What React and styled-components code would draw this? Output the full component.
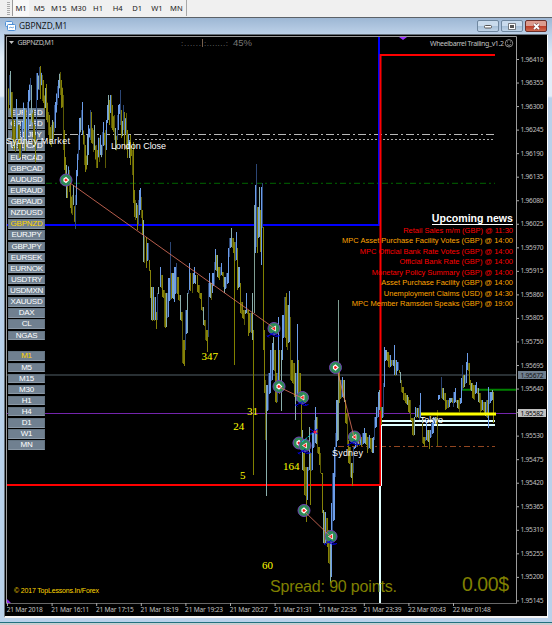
import React from 'react';
import styled, { createGlobalStyle } from 'styled-components';

const periods = ['M1', 'M5', 'M15', 'M30', 'H1', 'H4', 'D1', 'W1', 'MN'];

const symbols = [
  'EURUSD', 'GBPUSD', 'USDJPY', 'USDCAD', 'EURCAD', 'GBPCAD', 'AUDUSD',
  'EURAUD', 'GBPAUD', 'NZDUSD', 'GBPNZD', 'EURJPY', 'GBPJPY', 'EURSEK',
  'EURNOK', 'USDTRY', 'USDMXN', 'XAUUSD', 'DAX', 'CL', 'NGAS',
];

const news = [
  { text: 'Retail Sales m/m (GBP) @ 11:30', high: true },
  { text: 'MPC Asset Purchase Facility Votes (GBP) @ 14:00' },
  { text: 'MPC Official Bank Rate Votes (GBP) @ 14:00', high: true },
  { text: 'Official Bank Rate (GBP) @ 14:00', high: true },
  { text: 'Monetary Policy Summary (GBP) @ 14:00', high: true },
  { text: 'Asset Purchase Facility (GBP) @ 14:00' },
  { text: 'Unemployment Claims (USD) @ 14:30' },
  { text: 'MPC Member Ramsden Speaks (GBP) @ 19:00' },
];

const times = [
  '21 Mar 2018', '21 Mar 16:11', '21 Mar 17:15', '21 Mar 18:19',
  '21 Mar 19:23', '21 Mar 20:27', '21 Mar 21:31', '21 Mar 22:35',
  '21 Mar 23:39', '22 Mar 00:43', '22 Mar 01:48',
];

const prices = Array.from({ length: 24 }, (_, i) => ((196410 - i * 55) / 100000).toFixed(5));

// x, high, low
const bars = `
8 80 118,9 75 105,10 71 112,11 82 128,12 92 140,13 120 150,15 120 152,16 99 138,17 105 148,19 125 158,
20 130 165,21 122 160,23 92 140,24 108 150,26 110 150,27 102 140,28 90 130,29 78 108,30 78 100,31 85 125,
33 110 145,35 125 173,36 73 150,37 73 100,38 70 95,39 67 90,40 66 99,41 68 90,42 75 101,43 80 103,44 90 115,
45 88 108,46 84 120,47 95 130,48 112 135,49 115 142,50 120 152,51 125 147,52 120 140,53 115 146,54 105 132,
55 102 128,56 86 120,57 86 105,58 80 98,59 68 94,60 72 95,61 80 108,62 80 115,63 95 150,64 130 170,65 150 182,
66 165 198,67 178 198,68 162 182,69 170 192,70 180 208,71 190 220,72 195 215,73 185 205,74 200 228,75 195 229,
76 170 205,77 145 185,78 135 160,79 118 150,80 112 138,81 110 130,82 102 135,83 125 150,84 135 165,85 145 172,
86 150 175,87 135 165,88 125 155,90 110 140,91 112 143,92 122 150,93 130 152,94 125 150,95 140 165,96 145 168,
97 150 168,98 130 165,99 138 162,100 135 155,101 140 162,102 132 155,103 122 146,104 128 150,105 130 168,
106 120 150,107 98 130,108 95 120,109 100 125,110 88 120,111 95 128,112 105 130,113 110 138,114 115 140,
115 128 150,116 130 156,117 115 140,118 105 130,119 100 118,120 90 125,121 110 138,122 115 142,123 105 130,
124 112 150,125 112 140,126 113 150,127 130 158,128 128 155,129 140 158,130 135 165,131 142 160,132 150 175,
133 142 203,134 190 217,135 200 220,136 203 218,137 205 230,138 200 225,139 190 215,140 188 210,141 197 218,
142 210 235,143 220 262,146 237 268,148 243 260,150 270 298,151 287 320,153 287 320,155 297 320,156 312 329,
157 293 320,160 267 287,162 275 297,164 290 327,166 293 327,168 278 317,170 242 300,172 273 298,174 267 302,
176 263 293,178 277 300,180 295 320,182 312 363,184 340 366,185 310 350,187 293 333,189 263 290,192 273 293,
194 267 283,197 275 292,199 285 298,201 293 310,203 307 325,205 320 340,207 330 352,208 283 337,209 273 297,
211 283 300,212 273 293,214 262 285,215 249 270,217 255 277,219 267 280,221 263 275,223 272 287,224 277 293,
226 273 288,228 248 283,229 238 257,231 228 247,233 238 253,234 242 365,236 232 260,237 248 290,239 267 287,
240 283 313,242 302 318,244 310 325,246 293 313,248 310 336,250 313 332,252 293 340,253 330 475,254 205 313,
255 185 253,256 164 247,257 207 253,259 187 237,260 210 252,261 187 265,262 183 228,263 227 350,264 330 393,
265 380 440,266 385 496,268 373 410,270 350 393,272 343 380,273 337 370,275 350 402,277 373 402,278 317 393,
281 350 411,282 315 360,284 297 337,286 293 347,287 305 350,289 291 342,290 317 380,292 360 383,294 363 397,
295 373 420,297 324 400,298 360 393,300 373 403,301 397 443,302 430 470,304 453 495,306 467 522,307 467 500,
309 427 470,310 453 505,312 433 470,314 420 447,315 407 443,317 417 453,319 447 465,320 453 473,322 473 513,
323 510 543,325 512 543,327 518 547,328 530 563,330 543 583,331 503 577,332 473 543,334 447 520,335 433 477,
336 400 447,338 300 440,339 370 403,341 380 398,342 377 397,344 380 402,345 400 423,347 413 445,348 440 463,
350 447 477,352 463 486,353 447 473,355 433 448,356 432 447,358 433 445,360 437 445,362 433 445,364 428 443,
366 433 445,367 437 453,369 435 448,371 438 452,373 437 453,374 417 440,376 407 427,378 392 417,379 390 410,
381 407 425,383 383 417,384 347 387,386 350 360,388 352 367,390 355 367,392 360 365,394 345 375,396 360 375,
398 362 370,400 372 383,401 380 392,403 387 400,405 393 403,407 395 405,408 397 412,410 400 420,412 418 435,
414 417 435,415 407 417,417 408 417,419 405 420,420 393 417,422 417 443,424 437 447,426 420 440,428 430 442,
429 430 449,431 423 437,433 417 433,435 417 423,437 410 446,438 395 400,441 377 398,443 388 400,445 393 410,
447 400 408,449 398 407,451 398 402,453 392 407,455 388 402,457 400 408,459 398 412,461 378 403,462 365 390,
464 375 387,466 362 383,467 353 370,469 363 385,470 380 390,472 383 398,474 385 400,476 382 393,478 388 402,
480 393 413,482 400 410,484 402 415,486 400 417,488 387 428,490 392 403,492 390 400,493 392 423`
  .split(',')
  .map((row) => row.trim().split(' ').map(Number));

// fills the skipped minutes between two neighbouring bars
const series = bars.flatMap((bar, i) => {
  const next = bars[i + 1];
  if (!next || next[0] - bar[0] < 2) return [bar];
  const a = Math.max(bar[1], next[1]);
  const b = Math.min(bar[2], next[2]);
  return [bar, [bar[0] + 1, Math.min(a, b), Math.max(a, b) + 1]];
});

const barColor = (i) => {
  const [, high, low] = series[i];
  const prev = series[i - 1] || series[i];
  const move = high + low - prev[1] - prev[2];
  if (i % 7 === 2) return '#8aafad';
  if (low - high > 90) return move < 0 ? '#7f9d92' : '#808000';
  if (i % 3 === 1) return move < 0 ? '#2c4675' : '#5c5a05';
  return move < 0 ? '#6c9de8' : '#858208';
};

// every third bar is a short one, so the dense part does not fill up
const barInset = (i) => {
  const [x, high, low] = series[i];
  return x < 133 && i % 3 === 0 ? (low - high) * 0.22 : 0;
};

const trades = [
  [66, 180], [274, 328.5, true], [279, 386.5], [302.5, 397.5, true],
  [299, 443], [305, 445.5, true], [304, 510.5], [331, 536.5, true],
  [335.5, 367.5], [354.5, 437, true],
];

const counts = [
  ['347', 201.5, 360], ['31', 247, 415], ['24', 233.3, 429.5],
  ['5', 240, 478.5], ['164', 283, 469.5], ['60', 262, 568.5],
];

const GlobalStyle = createGlobalStyle`
  * {
    box-sizing: border-box;
  }

  body {
    margin: 0;
    background: #f0f0f0;
    font-family: 'Liberation Sans', Arial, sans-serif;
    overflow: hidden;
  }
`;

const Page = styled.div`
  width: 552px;
  height: 625px;
  display: flex;
  flex-direction: column;
  background: #c9cdd0;
`;

const Toolbar = styled.nav`
  height: 17px;
  display: flex;
  align-items: stretch;
  padding-left: 7px;
  background: #f0f0f0;
`;

const Grip = styled.span`
  width: 3px;
  margin: 2px 2px 2px 0;
  background: repeating-linear-gradient(#aaa 0 1px, #f0f0f0 1px 2px);
`;

const PeriodGroup = styled.div`
  display: flex;
  width: 175px;
  height: 16px;
  border-right: 1px solid #a8a8a8;
`;

const Period = styled.button`
  width: ${({ $active }) => ($active ? '17px' : '19.6px')};
  padding: 0;
  border: 0;
  border-left: 1px solid ${({ $active }) => ($active ? '#999' : 'transparent')};
  background: ${({ $active }) => ($active ? '#f8f8f8' : 'transparent')};
  color: #222;
  font: 7.6px 'Noto Sans', sans-serif;
  text-align: center;
`;

const ChartWindow = styled.main`
  height: 606px;
  display: flex;
  flex-direction: column;
  padding: 0 4px 4px;
  border-top: 1px solid #5c6268;
  border-bottom: 1px solid #21717f;
  background: linear-gradient(#a0bad6 0, #bcd2ea 16px, #e2edf8 40px, #e2edf8 78px, #b9d1ea 80px);
`;

const TitleBar = styled.header`
  height: 16px;
  display: flex;
  align-items: center;
  margin: 0 -4px;
  padding: 0 5px 0 5px;
  background: linear-gradient(#9db7d4, #bdd1e8);
`;

const Title = styled.h1`
  flex: 1;
  margin: 0 0 0 3px;
  color: #111;
  font: 8.4px/14px 'Open Sans', sans-serif;
`;

const WindowButtons = styled.div`
  display: flex;
  gap: 2px;
`;

const WindowButton = styled.button`
  width: 22px;
  height: 12px;
  display: grid;
  place-items: center;
  padding: 0;
  border: 1px solid ${({ $close }) => ($close ? '#6b2f2a' : '#6f879f')};
  border-radius: 2px;
  background: ${({ $close }) =>
    $close
      ? 'linear-gradient(#dc9b8e 0 45%, #bd3a25 50%, #cf6a50)'
      : 'linear-gradient(#c9dbed 0 45%, #a5bed7 50%, #bfd4e8)'};
`;

const ChartFrame = styled.section`
  position: relative;
  width: 544px;
  height: 584px;
  border: 1px solid #66707a;
  border-right: 1px solid #fff;
  border-bottom: 2px solid #f4f4f4;
  background: #000;
`;

const Layer = styled.svg`
  position: absolute;
  inset: 0;
  width: 542px;
  height: 581px;
  pointer-events: none;
  font-family: 'Liberation Sans', Arial, sans-serif;
`;

const SideButtons = styled.div`
  position: absolute;
  top: 73px;
  left: 3px;
  width: 37px;
`;

const ButtonList = styled.div`
  display: grid;
  grid-auto-rows: 11.14px;
  margin-bottom: 9.8px;
`;

const SideButton = styled.button`
  height: 9.4px;
  padding: 0;
  border: 1px solid #647482;
  border-bottom-color: #8a98a6;
  background: #708090;
  color: ${({ $active }) => ($active ? '#ffd700' : '#fff')};
  font: 8px/8px 'Liberation Sans', Arial, sans-serif;
  letter-spacing: -0.25px;
`;

const News = styled.aside`
  position: absolute;
  top: 177px;
  right: 34px;
  display: flex;
  flex-direction: column;
  align-items: flex-end;
`;

const NewsTitle = styled.h2`
  margin: 0 0 1px;
  border-bottom: 1px solid #fff;
  color: #fff;
  font: bold 10.6px/12px 'Liberation Sans', Arial, sans-serif;
`;

const NewsRow = styled.p`
  margin: 0;
  color: ${({ $high }) => ($high ? '#ff0000' : '#ffa500')};
  font-size: 7.52px;
  line-height: 10.44px;
  white-space: nowrap;
`;

function Marker({ x, y, exit }) {
  return (
    <g transform={`translate(${x} ${y})`}>
      <circle r="6" fill="#2e8b57" stroke="#7440b5" strokeWidth="1" />
      {exit ? (
        <path d="M-2.5 0L1.5-2.5V2.5Z" fill="#ff1a1a" stroke="#fff" strokeWidth=".8" />
      ) : (
        <path d="M-2-1L0-2.5L2.5 0L0 2.5L-2 1Z" fill="#ff1a1a" stroke="#fff" strokeWidth="1.2" />
      )}
      {exit && <path d="M-7 8L-3 6L0 4L4 8M-4 5L2 8L6 7M-7 7L-5 9" fill="none" stroke="#0000dc" />}
    </g>
  );
}

function ChartLines() {
  return (
    <Layer viewBox="5 35 542 581">
      <path d="M6.5 603V36.5H516.5V603" fill="none" stroke="#9b9b9b" />
      <path d="M6 603.5H517" stroke="#686868" />
      <path d="M54 134.5H495" stroke="#b8b8b8" strokeDasharray="8 3 2 3" />
      <path d="M135 139.5H495" stroke="#aaa" strokeDasharray="2 2" />
      <path d="M46 183.3H495" stroke="#006400" strokeDasharray="6 3 2 3" />
      <path d="M7 375H516" stroke="#526069" strokeWidth="1.2" />
      <path d="M7 413.5H516" stroke="#7425ad" />
      <path d="M338 446.5H495" stroke="#914520" strokeDasharray="6 3 2 3" />
      <path d="M7 225H380M379 37V225" stroke="#0000ff" strokeWidth="2" />
      <path d="M380.5 54V486M380 55H495M7 485H380" stroke="#ff0000" strokeWidth="2" />
      <path d="M381.5 421V486" stroke="#e0ffff" />
      <path d="M380 486V603M381 421H495M381 425H495" stroke="#e0ffff" strokeWidth="2" />
      <path d="M462 389.8H516" stroke="#008000" strokeWidth="2" />
    </Layer>
  );
}

function ChartSeries() {
  return (
    <Layer viewBox="5 35 542 581">
      {series.map(([x, high, low], i) => (
        <rect
          key={x}
          x={x}
          y={high + barInset(i)}
          width="1"
          height={low - high - barInset(i) * 2}
          fill={barColor(i)}
        />
      ))}
      <path d="M421 414H496" stroke="#ffff00" strokeWidth="3" />
      {trades.map(([x, y, exit]) => (
        <Marker key={`${x}-${y}`} x={x} y={y} exit={exit} />
      ))}
      <path
        d="M70 183L274 328M279 387L302 398M304 511L331 537M338 373L354 437"
        fill="none"
        stroke="#e6755f"
        strokeWidth=".8"
      />
      <path d="M302 442L315 431" stroke="#00ced1" strokeDasharray="3 1" />
      <path d="M310 429L318 434M310 434L318 429" stroke="#0000dc" />
      <circle cx="315" cy="432" r="1.5" fill="#ff1040" />
      <g fill="#fff" fontSize="9">
        <text x="6" y="143.5" textLength="64">Sydney Market</text>
        <text x="111" y="149" textLength="55">London Close</text>
        <text x="332" y="456" textLength="31">Sydney</text>
        <text x="420" y="423" textLength="23">Tokyo</text>
      </g>
      <g fill="#ffff00" fontSize="11" fontFamily="Liberation Serif, serif">
        {counts.map(([text, x, y]) => (
          <text key={text} x={x} y={y}>{text}</text>
        ))}
      </g>
      <g fill="#808000">
        <text x="270" y="592" fontSize="16" textLength="127">Spread: 90 points.</text>
        <text x="462" y="591" fontSize="19.5" textLength="47">0.00$</text>
      </g>
      <text x="14" y="593" fill="#ffd700" fontSize="7" textLength="85">© 2017 TopLessons.In/Forex</text>
      <g fill="#c0c0c0" fontFamily="Noto Sans, sans-serif" fontSize="6.6">
        <path d="M9 41H14L11.5 44Z" />
        <text x="17.5" y="45" fontSize="7" textLength="37">GBPNZD,M1</text>
        <text x="430" y="45.5" fontSize="7" textLength="74">Wheelbarrel Trailing_v1.2</text>
        <g fill="none" stroke="#c0c0c0" strokeWidth=".7">
          <circle cx="509" cy="43.3" r="3.7" />
          <path d="M507 44.5Q509 46.5 511 44.5M507.5 41.5V42.5M510.5 41.5V42.5" />
        </g>
        {times.map((time, i) => (
          <g key={time}>
            <path d={`M${7.5 + i * 44.6} 603V606`} stroke="#aaa" />
            <text x={6.7 + i * 44.6} y="612" textLength={i === 0 ? 36 : 38}>{time}</text>
          </g>
        ))}
        {prices.map((price, i) => (
          <g key={price}>
            <path d={`M517 ${59.5 + i * 23.54}H519`} stroke="#aaa" />
            {price !== '1.95585' && <text x="520.5" y={61.5 + i * 23.54} textLength="23">{price}</text>}
          </g>
        ))}
        <rect x="518" y="371" width="28" height="8" fill="#708090" />
        <text x="520.5" y="377.5" fill="#111" textLength="23">1.95672</text>
        <rect x="518" y="409" width="28" height="8" fill="#c0c0c0" />
        <text x="520.5" y="415.5" fill="#000" textLength="23">1.95582</text>
      </g>
      <g fill="#777">
        <text x="181" y="46" fontSize="8" textLength="20">:......</text>
        <path d="M202.5 39V47" stroke="#77604c" />
        <text x="204" y="46" fontSize="8" textLength="24">:.......:</text>
        <text x="233" y="46" fontSize="9.5" textLength="19">45%</text>
      </g>
      <path d="M399 37H407L403 40Z" fill="#9932ff" />
      <path d="M7 599L11 603H7Z" fill="#8a2be2" />
    </Layer>
  );
}

function Chart() {
  return (
    <ChartFrame>
      <ChartLines />
      <SideButtons>
        <ButtonList>
          {symbols.map((symbol) => (
            <SideButton key={symbol} $active={symbol === 'GBPNZD'}>{symbol}</SideButton>
          ))}
        </ButtonList>
        <ButtonList>
          {periods.map((period) => (
            <SideButton key={period} $active={period === 'M1'}>{period}</SideButton>
          ))}
        </ButtonList>
      </SideButtons>
      <News>
        <NewsTitle>Upcoming news</NewsTitle>
        {news.map(({ text, high }) => (
          <NewsRow key={text} $high={high}>{text}</NewsRow>
        ))}
      </News>
      <ChartSeries />
    </ChartFrame>
  );
}

function App() {
  return (
    <Page>
      <GlobalStyle />
      <Toolbar>
        <Grip />
        <PeriodGroup>
          {periods.map((period) => (
            <Period key={period} $active={period === 'M1'}>{period}</Period>
          ))}
        </PeriodGroup>
      </Toolbar>
      <ChartWindow>
        <TitleBar>
          <svg width="11" height="10" viewBox="0 0 11 10">
            <rect x=".5" y=".5" width="7" height="5" rx="1" fill="#eef7ff" stroke="#4c8fd6" />
            <rect x="2.5" y="3.5" width="8" height="6" rx="1" fill="#fff" stroke="#4c8fd6" />
            <path d="M4 7L6 6L7 7L9 6" fill="none" stroke="#7badde" />
          </svg>
          <Title>GBPNZD,M1</Title>
          <WindowButtons>
            <WindowButton>
              <svg width="8" height="5"><rect x=".5" y="1.5" width="7" height="2.5" rx="1" fill="#fff" stroke="#555" /></svg>
            </WindowButton>
            <WindowButton>
              <svg width="8" height="7"><rect x="1.5" y="1.5" width="5" height="4" fill="#555" stroke="#fff" /><path d="M.5 .5H7.5V6.5H.5Z" fill="none" stroke="#555" strokeWidth=".7" /></svg>
            </WindowButton>
            <WindowButton $close>
              <svg width="9" height="7"><path d="M2 1L7 6M7 1L2 6" stroke="#704040" strokeWidth="3" /><path d="M2 1L7 6M7 1L2 6" stroke="#fff" strokeWidth="1.8" /></svg>
            </WindowButton>
          </WindowButtons>
        </TitleBar>
        <Chart />
      </ChartWindow>
    </Page>
  );
}

export default App;
